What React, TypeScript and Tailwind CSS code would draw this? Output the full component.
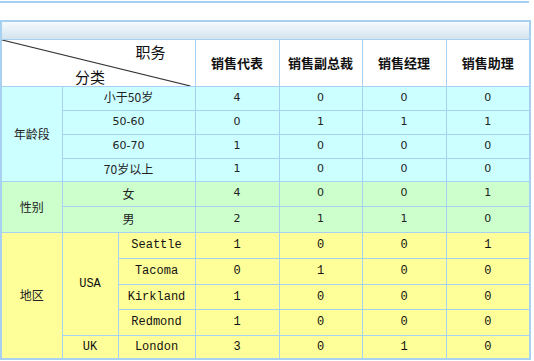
import React from 'react';

const cell = 'border border-[#a8d0f0] text-center align-middle p-0';
const num = "font-['DejaVu_Sans',sans-serif] text-[11px] text-[#222]";
const mono = "font-['Liberation_Mono',monospace] text-[12px] text-[#111]";
const cjk = "font-['Noto_Sans_CJK_SC',sans-serif] text-[12px] text-[#222]";

const roles = ['销售代表', '销售副总裁', '销售经理', '销售助理'];

type Row = { label: string; h: string; values: number[] };

const ageRows: Row[] = [
  { label: '小于50岁', h: 'h-[24px]', values: [4, 0, 0, 0] },
  { label: '50-60', h: 'h-[24px]', values: [0, 1, 1, 1] },
  { label: '60-70', h: 'h-[24px]', values: [1, 0, 0, 0] },
  { label: '70岁以上', h: 'h-[23px]', values: [1, 0, 0, 0] },
];

const genderRows: Row[] = [
  { label: '女', h: 'h-[25px]', values: [4, 0, 0, 1] },
  { label: '男', h: 'h-[26px]', values: [2, 1, 1, 0] },
];

const usaRows: Row[] = [
  { label: 'Seattle', h: 'h-[26px]', values: [1, 0, 0, 1] },
  { label: 'Tacoma', h: 'h-[26px]', values: [0, 1, 0, 0] },
  { label: 'Kirkland', h: 'h-[25px]', values: [1, 0, 0, 0] },
  { label: 'Redmond', h: 'h-[26px]', values: [1, 0, 0, 0] },
];

const Values = ({ values, font }: { values: number[]; font: string }) => (
  <>
    {values.map((v, i) => (
      <td key={i} className={`${cell} ${font}`}>
        {v}
      </td>
    ))}
  </>
);

export default function App() {
  return (
    <div className="w-[534px] h-[361px] bg-white overflow-hidden">
      <div className="w-[529px] h-[2px] mt-[1px] bg-[#a8d0f0]" />

      <table className="mt-[17px] w-[529px] table-fixed border-collapse border-2 border-[#a8d0f0]">
        <colgroup>
          <col className="w-[61px]" />
          <col className="w-[56px]" />
          <col className="w-[77px]" />
          <col className="w-[84px]" />
          <col className="w-[83px]" />
          <col className="w-[84px]" />
          <col className="w-[84px]" />
        </colgroup>
        <tbody>
          <tr className="h-[18px]">
            <td colSpan={7} className="border border-[#a8d0f0] bg-gradient-to-b from-[#f6fafd] to-[#d2e3ee]" />
          </tr>

          <tr className="h-[47px] bg-white">
            <td colSpan={3} className="border border-[#a8d0f0] p-0 relative">
              <svg className="absolute inset-0 w-full h-full" viewBox="0 0 193 46" preserveAspectRatio="none">
                <line x1="0" y1="0" x2="189" y2="46" stroke="#333" strokeWidth="1.2" />
              </svg>
              <div className="flex flex-col h-[46px] font-['Noto_Sans_CJK_SC',sans-serif] text-[15px] leading-[18px] text-[#111]">
                <span className="self-end mr-[29px] mt-[3px]">职务</span>
                <span className="self-start ml-[73px] mt-[7px]">分类</span>
              </div>
            </td>
            {roles.map((r) => (
              <td key={r} className={`${cell} font-['Noto_Sans_CJK_SC',sans-serif] text-[13px] font-bold text-[#111]`}>
                {r}
              </td>
            ))}
          </tr>

          {ageRows.map((row, i) => (
            <tr key={row.label} className={`${row.h} bg-[#ccffff]`}>
              {i === 0 && (
                <td rowSpan={4} className={`${cell} ${cjk}`}>
                  年龄段
                </td>
              )}
              <td colSpan={2} className={`${cell} ${num}`}>
                {row.label.match(/[\u4e00-\u9fa5]/) ? <span className={cjk}>{row.label}</span> : row.label}
              </td>
              <Values values={row.values} font={num} />
            </tr>
          ))}

          {genderRows.map((row, i) => (
            <tr key={row.label} className={`${row.h} bg-[#ccffcc]`}>
              {i === 0 && (
                <td rowSpan={2} className={`${cell} ${cjk}`}>
                  性别
                </td>
              )}
              <td colSpan={2} className={`${cell} ${cjk}`}>
                {row.label}
              </td>
              <Values values={row.values} font={num} />
            </tr>
          ))}

          {usaRows.map((row, i) => (
            <tr key={row.label} className={`${row.h} bg-[#ffff99]`}>
              {i === 0 && (
                <>
                  <td rowSpan={5} className={`${cell} ${cjk}`}>
                    地区
                  </td>
                  <td rowSpan={4} className={`${cell} ${mono}`}>
                    USA
                  </td>
                </>
              )}
              <td className={`${cell} ${mono}`}>{row.label}</td>
              <Values values={row.values} font={mono} />
            </tr>
          ))}

          <tr className="h-[24px] bg-[#ffff99]">
            <td className={`${cell} ${mono}`}>UK</td>
            <td className={`${cell} ${mono}`}>London</td>
            <Values values={[3, 0, 1, 0]} font={mono} />
          </tr>
        </tbody>
      </table>
    </div>
  );
}
